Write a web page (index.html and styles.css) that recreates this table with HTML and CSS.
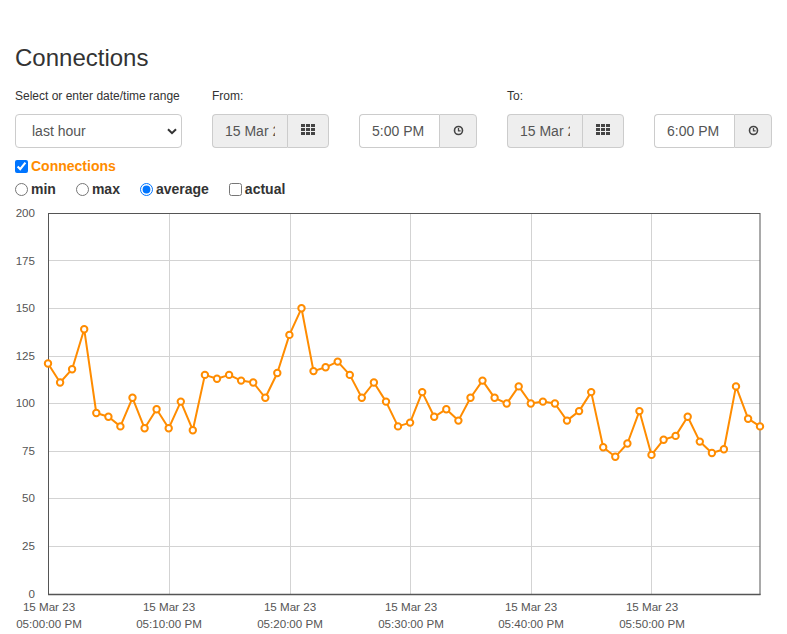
FILE: index.html
```html
<!DOCTYPE html>
<html>
<head>
<meta charset="utf-8">
<link rel="stylesheet" href="styles.css">
</head>
<body>
<main class="page">
  <h3 class="title">Connections</h3>
  <div class="filters">
    <div class="field">
      <label class="field-label">Select or enter date/time range</label>
      <div class="select-wrap">
        <select class="select"><option>last hour</option></select>
        <svg class="chevron" width="10" height="7" viewBox="0 0 10 7"><path d="M1 1.2 L5 5.2 L9 1.2" fill="none" stroke="#333" stroke-width="2"/></svg>
      </div>
    </div>
    <div class="field">
      <label class="field-label">From:</label>
      <div class="input-group">
        <input class="ig-input date" value="15 Mar 2023" readonly>
        <span class="ig-addon addon-date"><svg class="icon icon-grid" width="14" height="11" viewBox="0 0 14 11"><g fill="#444"><rect x="0" y="0" width="4" height="3"/><rect x="5" y="0" width="4" height="3"/><rect x="10" y="0" width="4" height="3"/><rect x="0" y="4" width="4" height="3"/><rect x="5" y="4" width="4" height="3"/><rect x="10" y="4" width="4" height="3"/><rect x="0" y="8" width="4" height="3"/><rect x="5" y="8" width="4" height="3"/><rect x="10" y="8" width="4" height="3"/></g></svg></span>
      </div>
    </div>
    <div class="field">
      <label class="field-label">&nbsp;</label>
      <div class="input-group">
        <input class="ig-input time" value="5:00 PM">
        <span class="ig-addon addon-time"><svg class="icon icon-clock" width="11" height="11" viewBox="0 0 11 11"><circle cx="5.5" cy="5.5" r="4" fill="none" stroke="#444" stroke-width="1.6"/><path d="M5.5 3 V5.9 H7.6" fill="none" stroke="#444" stroke-width="1.3"/></svg></span>
      </div>
    </div>
    <div class="field">
      <label class="field-label">To:</label>
      <div class="input-group">
        <input class="ig-input date" value="15 Mar 2023" readonly>
        <span class="ig-addon addon-date"><svg class="icon icon-grid" width="14" height="11" viewBox="0 0 14 11"><g fill="#444"><rect x="0" y="0" width="4" height="3"/><rect x="5" y="0" width="4" height="3"/><rect x="10" y="0" width="4" height="3"/><rect x="0" y="4" width="4" height="3"/><rect x="5" y="4" width="4" height="3"/><rect x="10" y="4" width="4" height="3"/><rect x="0" y="8" width="4" height="3"/><rect x="5" y="8" width="4" height="3"/><rect x="10" y="8" width="4" height="3"/></g></svg></span>
      </div>
    </div>
    <div class="field">
      <label class="field-label">&nbsp;</label>
      <div class="input-group">
        <input class="ig-input time" value="6:00 PM">
        <span class="ig-addon addon-time"><svg class="icon icon-clock" width="11" height="11" viewBox="0 0 11 11"><circle cx="5.5" cy="5.5" r="4" fill="none" stroke="#444" stroke-width="1.6"/><path d="M5.5 3 V5.9 H7.6" fill="none" stroke="#444" stroke-width="1.3"/></svg></span>
      </div>
    </div>
  </div>
  <label class="series"><input type="checkbox" checked><span class="series-label">Connections</span></label>
  <div class="modes">
    <label class="mode"><input type="radio" name="m">min</label>
    <label class="mode"><input type="radio" name="m">max</label>
    <label class="mode"><input type="radio" name="m" checked>average</label>
    <label class="mode"><input type="checkbox">actual</label>
  </div>
</main>
<svg class="chart" width="787" height="430" viewBox="0 200 787 430">
  <defs>
    <marker id="dot" markerWidth="10" markerHeight="10" refX="5" refY="5" markerUnits="userSpaceOnUse">
      <circle cx="5" cy="5" r="3.2" fill="#fff" stroke="#ff8c00" stroke-width="2"/>
    </marker>
  </defs>
  <g class="grid" stroke="#d3d3d3" stroke-width="1">
    <line x1="48" y1="546.5" x2="760" y2="546.5"/>
    <line x1="48" y1="498.5" x2="760" y2="498.5"/>
    <line x1="48" y1="451.5" x2="760" y2="451.5"/>
    <line x1="48" y1="403.5" x2="760" y2="403.5"/>
    <line x1="48" y1="356.5" x2="760" y2="356.5"/>
    <line x1="48" y1="308.5" x2="760" y2="308.5"/>
    <line x1="48" y1="260.5" x2="760" y2="260.5"/>
    <line x1="169.5" y1="213" x2="169.5" y2="594"/>
    <line x1="290.5" y1="213" x2="290.5" y2="594"/>
    <line x1="410.5" y1="213" x2="410.5" y2="594"/>
    <line x1="531.5" y1="213" x2="531.5" y2="594"/>
    <line x1="651.5" y1="213" x2="651.5" y2="594"/>
  </g>
  <rect x="48.5" y="213.5" width="711.5" height="381" fill="none" stroke="#555" stroke-width="1"/>
  <line x1="48" y1="594.5" x2="760.5" y2="594.5" stroke="#555" stroke-width="1.5"/>
  <g class="ylabels" text-anchor="end">
    <text x="35" y="217">200</text>
    <text x="35" y="265">175</text>
    <text x="35" y="312">150</text>
    <text x="35" y="360">125</text>
    <text x="35" y="407">100</text>
    <text x="35" y="455">75</text>
    <text x="35" y="502">50</text>
    <text x="35" y="550">25</text>
    <text x="35" y="598">0</text>
  </g>
  <g class="xlabels" text-anchor="middle">
    <text x="49" y="611">15 Mar 23</text><text x="49" y="628">05:00:00 PM</text>
    <text x="169" y="611">15 Mar 23</text><text x="169" y="628">05:10:00 PM</text>
    <text x="290" y="611">15 Mar 23</text><text x="290" y="628">05:20:00 PM</text>
    <text x="411" y="611">15 Mar 23</text><text x="411" y="628">05:30:00 PM</text>
    <text x="531" y="611">15 Mar 23</text><text x="531" y="628">05:40:00 PM</text>
    <text x="652" y="611">15 Mar 23</text><text x="652" y="628">05:50:00 PM</text>
  </g>
  <polyline class="series-line" fill="none" stroke="#ff8c00" stroke-width="2" stroke-linejoin="round"
    marker-start="url(#dot)" marker-mid="url(#dot)" marker-end="url(#dot)"
    points="48,363.5 60.1,382.5 72.1,369.2 84.2,329.2 96.3,413 108.4,416.8 120.4,426.4 132.5,397.8 144.6,428.3 156.6,409.2 168.7,428.3 180.8,401.6 192.8,430.2 204.9,374.9 217,378.7 229.1,374.9 241.1,380.6 253.2,382.5 265.3,397.8 277.3,373 289.4,334.9 301.5,308.3 313.5,371.1 325.6,367.3 337.7,361.6 349.8,374.9 361.8,397.8 373.9,382.5 386,401.6 398,426.4 410.1,422.6 422.2,392.1 434.2,416.8 446.3,409.2 458.4,420.6 470.5,397.8 482.5,380.6 494.6,397.8 506.7,403.5 518.7,386.4 530.8,403.5 542.9,401.6 554.9,403.5 567,420.6 579.1,411.1 591.2,392.1 603.2,447.3 615.3,456.8 627.4,443.5 639.4,411.1 651.5,454.9 663.6,439.7 675.6,435.9 687.7,416.8 699.8,441.6 711.9,453 723.9,449.2 736,386.4 748.1,418.7 760,426.4"/>
</svg>
</body>
</html>
```

FILE: styles.css
```css
html, body {
  margin: 0;
  background: #fff;
}
body {
  font-family: "Liberation Sans", Arial, sans-serif;
  color: #333;
  overflow: hidden;
}
.page {
  padding: 45px 15px 0;
}
.title {
  margin: 0;
  font-size: 24px;
  line-height: 26px;
  font-weight: normal;
  color: #333;
}
.filters {
  display: flex;
  gap: 30px;
  margin-top: 17px;
}
.field {
  display: flex;
  flex-direction: column;
}
.field-label {
  font-size: 12px;
  line-height: 17px;
  height: 17px;
  margin-bottom: 9px;
  color: #333;
}
.select-wrap {
  position: relative;
  width: 167px;
  height: 34px;
}
.select {
  -webkit-appearance: none;
  appearance: none;
  width: 100%;
  height: 100%;
  box-sizing: border-box;
  border: 1px solid #ccc;
  border-radius: 4px;
  background: #fff;
  font-family: "Liberation Sans", Arial, sans-serif;
  font-size: 14px;
  color: #555;
  padding: 0 16px;
  margin: 0;
  outline: none;
}
.chevron {
  position: absolute;
  right: 5px;
  top: 14px;
  pointer-events: none;
}
.input-group {
  display: flex;
  height: 34px;
}
.ig-input {
  box-sizing: border-box;
  height: 34px;
  margin: 0;
  border: 1px solid #ccc;
  border-right: 0;
  border-radius: 4px 0 0 4px;
  padding: 0 12px;
  font-family: "Liberation Sans", Arial, sans-serif;
  font-size: 14px;
  color: #555;
  outline: none;
}
.ig-input.date {
  width: 75px;
  background: #eee;
}
.ig-input.time {
  width: 80px;
  background: #fff;
}
.ig-addon {
  box-sizing: border-box;
  height: 34px;
  border: 1px solid #ccc;
  border-radius: 0 4px 4px 0;
  background: #eee;
  display: flex;
  align-items: center;
  justify-content: center;
}
.addon-date {
  width: 42px;
}
.addon-time {
  width: 38px;
}
.icon {
  display: block;
}
.icon-grid {
  margin-top: -4px;
}
.icon-clock {
  margin-top: -1px;
  margin-left: 1px;
}
.series {
  display: flex;
  align-items: center;
  margin-top: 8px;
  line-height: 20px;
  font-size: 14px;
  font-weight: bold;
}
.series input {
  margin: 0 3px 0 0;
  width: 13px;
  height: 13px;
}
.series-label {
  color: #ff8c00;
}
.modes {
  display: flex;
  gap: 20px;
  margin-top: 3px;
  line-height: 20px;
  font-size: 14px;
  font-weight: bold;
  color: #333;
}
.mode {
  display: flex;
  align-items: center;
}
.mode input {
  margin: 0 3px 0 0;
  width: 13px;
  height: 13px;
}
.chart {
  display: block;
  margin-top: 1px;
}
.chart text {
  font-family: "Liberation Sans", Arial, sans-serif;
  font-size: 11.6px;
  fill: #555;
}
```
